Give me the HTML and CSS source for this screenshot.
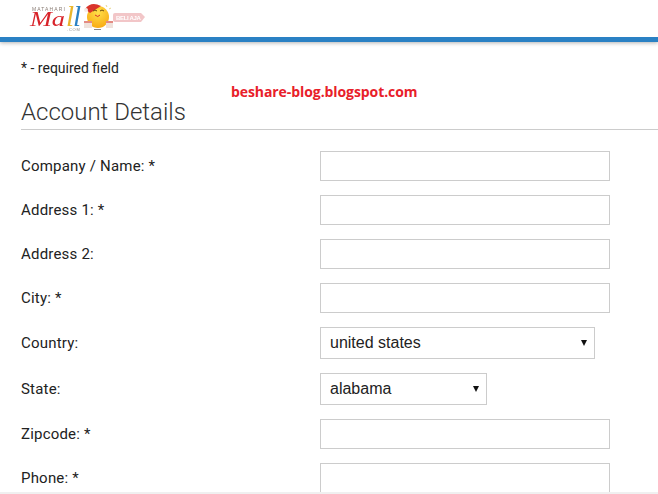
FILE: index.html
```html
<!doctype html>
<html lang="en">
	<head>
		<meta charset="UTF-8" />
		<title>Account Details</title>
		<link rel="stylesheet" href="styles.css">
	</head>
	<body>
		<header class="top">
			<svg class="logo" width="150" height="32" viewBox="0 0 150 32">
				<defs>
					<radialGradient id="sun" cx=".5" cy=".3" r=".8">
						<stop offset="0" stop-color="#ffe04a"/>
						<stop offset="1" stop-color="#f7a30c"/>
					</radialGradient>
				</defs>
				<text x="32" y="11" class="logo-small" textLength="33">MATAHARI</text>
				<text x="30" y="26" class="logo-mall"><tspan fill="#d8232a" class="logo-low" textLength="35" lengthAdjust="spacingAndGlyphs">Ma</tspan><tspan fill="#e9b52c" dx="1">l</tspan><tspan fill="#2a80c4" dx="-1">l</tspan></text>
				<text x="67" y="31" class="logo-com" textLength="13">.COM</text>
				<circle cx="98" cy="17" r="11" fill="url(#sun)"/>
				<path d="M85 9 Q91 1 101 6 L90 13 Z" fill="#d9342b"/>
				<circle cx="86" cy="10" r="2" fill="#f6ece6"/>
				<path d="M93 11 q2 -2 4 0 M100 11 q2 -2 4 0" stroke="#6b4a10" fill="none"/>
				<path d="M95 15 q3 3 5 0" stroke="#d9342b" fill="none"/>
				<rect x="84" y="21" width="8" height="7" fill="#efe2dc"/>
				<rect x="106" y="21" width="7" height="7" fill="#efe2dc"/>
				<path d="M84 22 h8 M106 22 h7" stroke="#d9342b"/>
				<path d="M94 29.500 h7" stroke="#888"/>
				<path d="M106 5 l1 2 M109 9 l2 -1" stroke="#e8d58a"/>
				<path d="M115 13 H141 L145 17 L141 22 H115 Q113 22 113 20 V15 Q113 13 115 13 Z" fill="#f2c6c8"/>
				<text x="116" y="20" class="logo-btn" textLength="25">BELI AJA</text>
			</svg>
		</header>
		<main class="page">
			<p class="note">* - required field</p>
			<p class="mark">beshare-blog.blogspot.com</p>
			<h2 class="title">Account Details</h2>
			<form class="fields">
				<label class="row"><span class="name">Company / Name: *</span><input class="text" type="text"></label>
				<label class="row"><span class="name">Address 1: *</span><input class="text" type="text"></label>
				<label class="row"><span class="name">Address 2:</span><input class="text" type="text"></label>
				<label class="row"><span class="name">City: *</span><input class="text" type="text"></label>
				<label class="row"><span class="name">Country:</span>
					<span class="pick country"><select><option>united states</option></select></span>
				</label>
				<label class="row"><span class="name">State:</span>
					<span class="pick state"><select><option>alabama</option></select></span>
				</label>
				<label class="row"><span class="name">Zipcode: *</span><input class="text" type="text"></label>
				<label class="row"><span class="name">Phone: *</span><input class="text" type="text"></label>
			</form>
		</main>
		<div class="strip"></div>
	</body>
</html>
```

FILE: styles.css
```css
*{
	margin: 0;
	padding: 0;
	box-sizing: border-box;
}
html,body{
	height: 494px;
	overflow: hidden;
}
body{
	background: #fff;
	color: #222;
	font-family: Roboto, sans-serif;
	font-size: 15px;
	letter-spacing: .2px;
}
.top{
	height: 42px;
	border-bottom: 5px solid #2a81c4;
	box-shadow: 0 1px 4px rgba(0,0,0,.3);
}
.logo{
	display: block;
	filter: blur(.4px);
}
.logo-small{
	font: 5px "Liberation Sans", sans-serif;
	fill: #8a7d75;
}
.logo-mall{
	font: italic 29px "Liberation Serif", serif;
	letter-spacing: 0;
}
.logo-low{
	font-size: 20px;
}
.logo-com{
	font: 4px "Liberation Sans", sans-serif;
	fill: #8a8a8a;
}
.logo-btn{
	font: bold 6px "Liberation Sans", sans-serif;
	fill: #fff;
}
.page{
	padding: 18px 0 0 21px;
	position: relative;
}
.note{
	font-size: 14px;
	line-height: 17px;
	letter-spacing: 0;
}
.mark{
	position: absolute;
	left: 231px;
	top: 40px;
	font: bold 14px/20px "Open Sans", sans-serif;
	letter-spacing: -.08px;
	color: #e8202a;
}
.title{
	font-weight: 300;
	font-size: 24px;
	line-height: 30px;
	margin-top: 20px;
	padding-bottom: 2px;
	border-bottom: 1px solid #ccc;
	color: #333;
	letter-spacing: 0;
}
.fields{
	margin-top: 21px;
}
.row{
	display: flex;
	align-items: center;
	margin-bottom: 14px;
}
.name{
	width: 299px;
}
.text{
	width: 290px;
	height: 30px;
	border: 1px solid #ccc;
	background: #fff;
}
.pick{
	position: relative;
	display: block;
	height: 32px;
}
.pick select{
	appearance: none;
	width: 100%;
	height: 32px;
	border: 1px solid #ccc;
	border-radius: 0;
	background: #fff;
	padding: 0 0 2px 9px;
	color: #222;
	font: 16px "Liberation Sans", sans-serif;
}
.pick::after{
	content: "";
	position: absolute;
	right: 8px;
	top: 13px;
	border-left: 3px solid transparent;
	border-right: 3px solid transparent;
	border-top: 6px solid #111;
}
.country{
	width: 275px;
}
.state{
	width: 167px;
}
.strip{
	position: absolute;
	left: 0;
	right: 0;
	top: 492px;
	height: 2px;
	background: #f0f0f0;
}
```
